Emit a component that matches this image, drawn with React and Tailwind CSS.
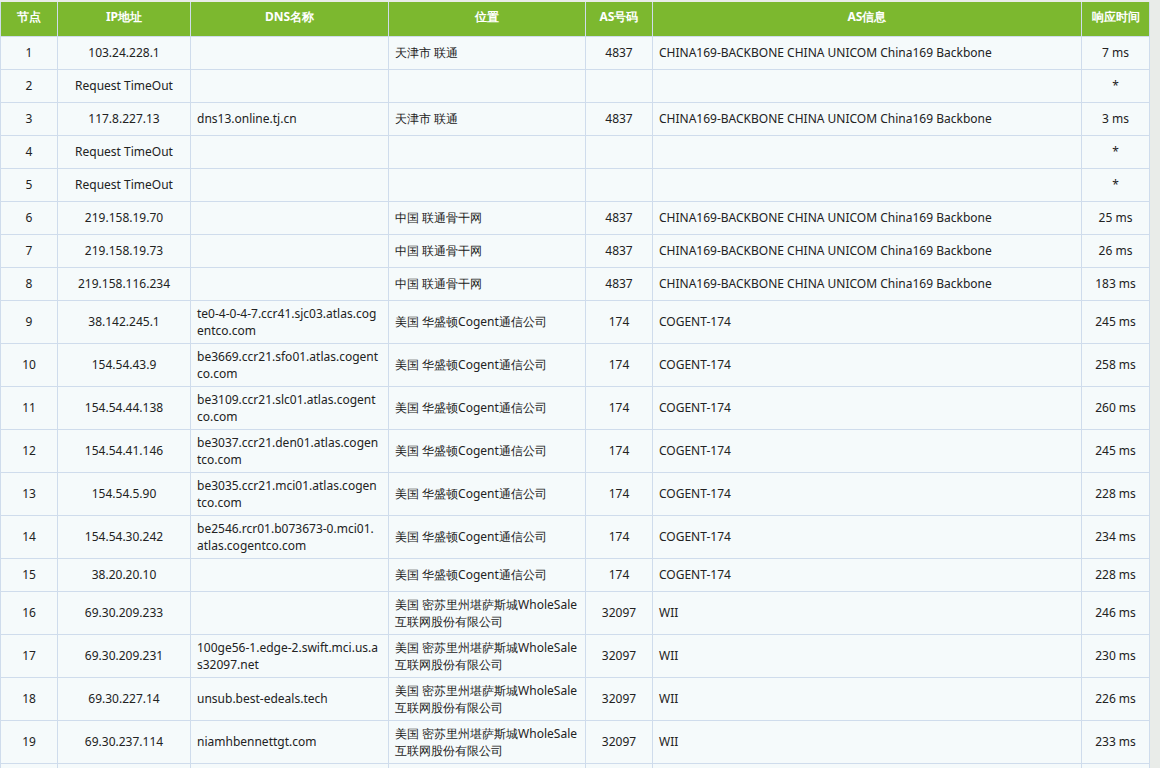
const rows = [
  ['1', '103.24.228.1', '', '天津市 联通', '4837', 'CHINA169-BACKBONE CHINA UNICOM China169 Backbone', '7 ms'],
  ['2', 'Request TimeOut', '', '', '', '', '*'],
  ['3', '117.8.227.13', 'dns13.online.tj.cn', '天津市 联通', '4837', 'CHINA169-BACKBONE CHINA UNICOM China169 Backbone', '3 ms'],
  ['4', 'Request TimeOut', '', '', '', '', '*'],
  ['5', 'Request TimeOut', '', '', '', '', '*'],
  ['6', '219.158.19.70', '', '中国 联通骨干网', '4837', 'CHINA169-BACKBONE CHINA UNICOM China169 Backbone', '25 ms'],
  ['7', '219.158.19.73', '', '中国 联通骨干网', '4837', 'CHINA169-BACKBONE CHINA UNICOM China169 Backbone', '26 ms'],
  ['8', '219.158.116.234', '', '中国 联通骨干网', '4837', 'CHINA169-BACKBONE CHINA UNICOM China169 Backbone', '183 ms'],
  ['9', '38.142.245.1', 'te0-4-0-4-7.ccr41.sjc03.atlas.cogentco.com', '美国 华盛顿Cogent通信公司', '174', 'COGENT-174', '245 ms'],
  ['10', '154.54.43.9', 'be3669.ccr21.sfo01.atlas.cogentco.com', '美国 华盛顿Cogent通信公司', '174', 'COGENT-174', '258 ms'],
  ['11', '154.54.44.138', 'be3109.ccr21.slc01.atlas.cogentco.com', '美国 华盛顿Cogent通信公司', '174', 'COGENT-174', '260 ms'],
  ['12', '154.54.41.146', 'be3037.ccr21.den01.atlas.cogentco.com', '美国 华盛顿Cogent通信公司', '174', 'COGENT-174', '245 ms'],
  ['13', '154.54.5.90', 'be3035.ccr21.mci01.atlas.cogentco.com', '美国 华盛顿Cogent通信公司', '174', 'COGENT-174', '228 ms'],
  ['14', '154.54.30.242', 'be2546.rcr01.b073673-0.mci01.atlas.cogentco.com', '美国 华盛顿Cogent通信公司', '174', 'COGENT-174', '234 ms'],
  ['15', '38.20.20.10', '', '美国 华盛顿Cogent通信公司', '174', 'COGENT-174', '228 ms'],
  ['16', '69.30.209.233', '', '美国 密苏里州堪萨斯城WholeSale互联网股份有限公司', '32097', 'WII', '246 ms'],
  ['17', '69.30.209.231', '100ge56-1.edge-2.swift.mci.us.as32097.net', '美国 密苏里州堪萨斯城WholeSale互联网股份有限公司', '32097', 'WII', '230 ms'],
  ['18', '69.30.227.14', 'unsub.best-edeals.tech', '美国 密苏里州堪萨斯城WholeSale互联网股份有限公司', '32097', 'WII', '226 ms'],
  ['19', '69.30.237.114', 'niamhbennettgt.com', '美国 密苏里州堪萨斯城WholeSale互联网股份有限公司', '32097', 'WII', '233 ms'],
  ['20', '', '', '', '', '', ''],
]

const headers = ['节点', 'IP地址', 'DNS名称', '位置', 'AS号码', 'AS信息', '响应时间']
const widths = ['w-[57px]', 'w-[133px]', 'w-[198px]', 'w-[197px]', 'w-[67px]', 'w-[429px]', 'w-[68px]']
const align = ['text-center', 'text-center', 'text-left', 'text-left', 'text-center', 'text-left', 'text-center']

export default function App() {
  return (
    <div className="h-[768px] overflow-hidden bg-[#e9ece9] pt-[2px] font-['DejaVu_Sans','Noto_Sans_CJK_SC',sans-serif] text-[12px] text-[#222]">
      <table className="w-[1149px] table-fixed border-collapse bg-[#f5fafb]">
        <thead>
          <tr className="bg-[#7cb82f] text-white">
            {headers.map((h, i) => (
              <th key={h} className={`${widths[i]} h-[34px] border-x border-[#cfdcec] pb-[3px] text-center font-bold`}>
                {h}
              </th>
            ))}
          </tr>
        </thead>
        <tbody>
          {rows.map((r) => (
            <tr key={r[0]}>
              {r.map((c, i) => (
                <td
                  key={i}
                  className={`${align[i]} h-[33px] break-all border border-[#cfdcec] py-[4px] pl-[6px] ${i === 2 || i === 3 ? 'pr-[8px]' : 'pr-[6px]'} align-middle leading-[17px]`}
                >
                  {r[0] === '20' ? '' : c}
                </td>
              ))}
            </tr>
          ))}
        </tbody>
      </table>
    </div>
  )
}
